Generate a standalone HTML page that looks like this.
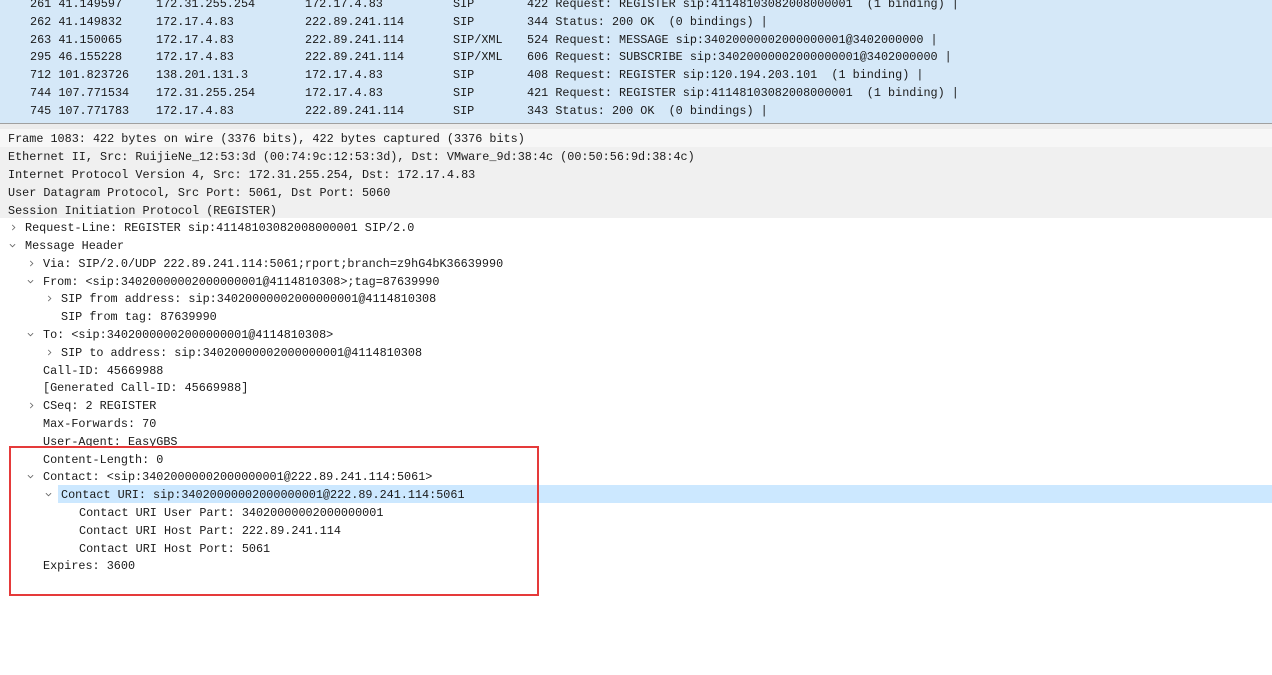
<!DOCTYPE html>
<html><head><meta charset="utf-8"><style>
body{margin:0;width:1272px;height:675px;background:#fff;overflow:hidden;position:relative;font-family:"Liberation Mono",monospace;font-size:11.8px;color:#1a1a1a}
.r{position:absolute;left:0;height:18px;line-height:18px;white-space:pre;width:1272px}
.list{position:absolute;left:0;top:0;width:1272px;height:123px;background:#d5e8f8;overflow:hidden}
.c{position:absolute;top:1px}
.gray{background:#f0f0f0}
svg.a{position:absolute;top:6px;width:7px;height:7px}
</style></head><body>
<div class="list">
<div class="r" style="top:-6px"><span class="c" style="left:30px">261 41.149597</span><span class="c" style="left:156px">172.31.255.254</span><span class="c" style="left:305px">172.17.4.83</span><span class="c" style="left:453px">SIP</span><span class="c" style="left:527px">422 Request: REGISTER sip:41148103082008000001  (1 binding) |</span></div>
<div class="r" style="top:11.8px"><span class="c" style="left:30px">262 41.149832</span><span class="c" style="left:156px">172.17.4.83</span><span class="c" style="left:305px">222.89.241.114</span><span class="c" style="left:453px">SIP</span><span class="c" style="left:527px">344 Status: 200 OK  (0 bindings) |</span></div>
<div class="r" style="top:29.6px"><span class="c" style="left:30px">263 41.150065</span><span class="c" style="left:156px">172.17.4.83</span><span class="c" style="left:305px">222.89.241.114</span><span class="c" style="left:453px">SIP/XML</span><span class="c" style="left:527px">524 Request: MESSAGE sip:34020000002000000001@3402000000 |</span></div>
<div class="r" style="top:47.4px"><span class="c" style="left:30px">295 46.155228</span><span class="c" style="left:156px">172.17.4.83</span><span class="c" style="left:305px">222.89.241.114</span><span class="c" style="left:453px">SIP/XML</span><span class="c" style="left:527px">606 Request: SUBSCRIBE sip:34020000002000000001@3402000000 |</span></div>
<div class="r" style="top:65.2px"><span class="c" style="left:30px">712 101.823726</span><span class="c" style="left:156px">138.201.131.3</span><span class="c" style="left:305px">172.17.4.83</span><span class="c" style="left:453px">SIP</span><span class="c" style="left:527px">408 Request: REGISTER sip:120.194.203.101  (1 binding) |</span></div>
<div class="r" style="top:83px"><span class="c" style="left:30px">744 107.771534</span><span class="c" style="left:156px">172.31.255.254</span><span class="c" style="left:305px">172.17.4.83</span><span class="c" style="left:453px">SIP</span><span class="c" style="left:527px">421 Request: REGISTER sip:41148103082008000001  (1 binding) |</span></div>
<div class="r" style="top:100.8px"><span class="c" style="left:30px">745 107.771783</span><span class="c" style="left:156px">172.17.4.83</span><span class="c" style="left:305px">222.89.241.114</span><span class="c" style="left:453px">SIP</span><span class="c" style="left:527px">343 Status: 200 OK  (0 bindings) |</span></div>
<div class="r" style="top:118.6px"><span class="c" style="left:30px">746 107.772052</span><span class="c" style="left:156px">172.17.4.83</span><span class="c" style="left:305px">222.89.241.114</span><span class="c" style="left:453px">SIP/XML</span><span class="c" style="left:527px">524 Request: MESSAGE sip:34020000002000000001@3402000000 |</span></div>
</div>
<div style="position:absolute;left:0;top:123px;width:1272px;height:1px;background:#a0a0a0"></div>
<div style="position:absolute;left:0;top:124px;width:1272px;height:5px;background:#ececec"></div>
<div class="gray" style="position:absolute;left:0;top:129px;width:1272px;height:89px"></div>
<div style="position:absolute;left:0;top:129px;width:1272px;height:18px;background:#f7f7f7"></div>
<div style="position:absolute;left:58px;top:485px;width:1214px;height:18px;background:#cce8ff"></div>
<div class="r" style="top:129px"><span class="c" style="left:8px">Frame 1083: 422 bytes on wire (3376 bits), 422 bytes captured (3376 bits)</span></div>
<div class="r" style="top:147px"><span class="c" style="left:8px">Ethernet II, Src: RuijieNe_12:53:3d (00:74:9c:12:53:3d), Dst: VMware_9d:38:4c (00:50:56:9d:38:4c)</span></div>
<div class="r" style="top:165px"><span class="c" style="left:8px">Internet Protocol Version 4, Src: 172.31.255.254, Dst: 172.17.4.83</span></div>
<div class="r" style="top:183px"><span class="c" style="left:8px">User Datagram Protocol, Src Port: 5061, Dst Port: 5060</span></div>
<div class="r" style="top:201px"><span class="c" style="left:8px">Session Initiation Protocol (REGISTER)</span></div>
<div class="r" style="top:218px"><svg class="a" style="left:10px" viewBox="0 0 8 8"><path d="M2.5 1L5.5 4L2.5 7" fill="none" stroke="#666" stroke-width="1"/></svg><span class="c" style="left:25px">Request-Line: REGISTER sip:41148103082008000001 SIP/2.0</span></div>
<div class="r" style="top:236px"><svg class="a" style="left:9px" viewBox="0 0 8 8"><path d="M1 2.5L4 5.5L7 2.5" fill="none" stroke="#666" stroke-width="1"/></svg><span class="c" style="left:25px">Message Header</span></div>
<div class="r" style="top:254px"><svg class="a" style="left:28px" viewBox="0 0 8 8"><path d="M2.5 1L5.5 4L2.5 7" fill="none" stroke="#666" stroke-width="1"/></svg><span class="c" style="left:43px">Via: SIP/2.0/UDP 222.89.241.114:5061;rport;branch=z9hG4bK36639990</span></div>
<div class="r" style="top:272px"><svg class="a" style="left:27px" viewBox="0 0 8 8"><path d="M1 2.5L4 5.5L7 2.5" fill="none" stroke="#666" stroke-width="1"/></svg><span class="c" style="left:43px">From: &lt;sip:34020000002000000001@4114810308&gt;;tag=87639990</span></div>
<div class="r" style="top:289px"><svg class="a" style="left:46px" viewBox="0 0 8 8"><path d="M2.5 1L5.5 4L2.5 7" fill="none" stroke="#666" stroke-width="1"/></svg><span class="c" style="left:61px">SIP from address: sip:34020000002000000001@4114810308</span></div>
<div class="r" style="top:307px"><span class="c" style="left:61px">SIP from tag: 87639990</span></div>
<div class="r" style="top:325px"><svg class="a" style="left:27px" viewBox="0 0 8 8"><path d="M1 2.5L4 5.5L7 2.5" fill="none" stroke="#666" stroke-width="1"/></svg><span class="c" style="left:43px">To: &lt;sip:34020000002000000001@4114810308&gt;</span></div>
<div class="r" style="top:343px"><svg class="a" style="left:46px" viewBox="0 0 8 8"><path d="M2.5 1L5.5 4L2.5 7" fill="none" stroke="#666" stroke-width="1"/></svg><span class="c" style="left:61px">SIP to address: sip:34020000002000000001@4114810308</span></div>
<div class="r" style="top:361px"><span class="c" style="left:43px">Call-ID: 45669988</span></div>
<div class="r" style="top:378px"><span class="c" style="left:43px">[Generated Call-ID: 45669988]</span></div>
<div class="r" style="top:396px"><svg class="a" style="left:28px" viewBox="0 0 8 8"><path d="M2.5 1L5.5 4L2.5 7" fill="none" stroke="#666" stroke-width="1"/></svg><span class="c" style="left:43px">CSeq: 2 REGISTER</span></div>
<div class="r" style="top:414px"><span class="c" style="left:43px">Max-Forwards: 70</span></div>
<div class="r" style="top:432px"><span class="c" style="left:43px">User-Agent: EasyGBS</span></div>
<div class="r" style="top:450px"><span class="c" style="left:43px">Content-Length: 0</span></div>
<div class="r" style="top:467px"><svg class="a" style="left:27px" viewBox="0 0 8 8"><path d="M1 2.5L4 5.5L7 2.5" fill="none" stroke="#666" stroke-width="1"/></svg><span class="c" style="left:43px">Contact: &lt;sip:34020000002000000001@222.89.241.114:5061&gt;</span></div>
<div class="r" style="top:485px"><svg class="a" style="left:45px" viewBox="0 0 8 8"><path d="M1 2.5L4 5.5L7 2.5" fill="none" stroke="#666" stroke-width="1"/></svg><span class="c" style="left:61px">Contact URI: sip:34020000002000000001@222.89.241.114:5061</span></div>
<div class="r" style="top:503px"><span class="c" style="left:79px">Contact URI User Part: 34020000002000000001</span></div>
<div class="r" style="top:521px"><span class="c" style="left:79px">Contact URI Host Part: 222.89.241.114</span></div>
<div class="r" style="top:539px"><span class="c" style="left:79px">Contact URI Host Port: 5061</span></div>
<div class="r" style="top:556px"><span class="c" style="left:43px">Expires: 3600</span></div>
<div style="position:absolute;left:9px;top:446px;width:526px;height:146px;border:2px solid #e53a3a"></div>
</body></html>
